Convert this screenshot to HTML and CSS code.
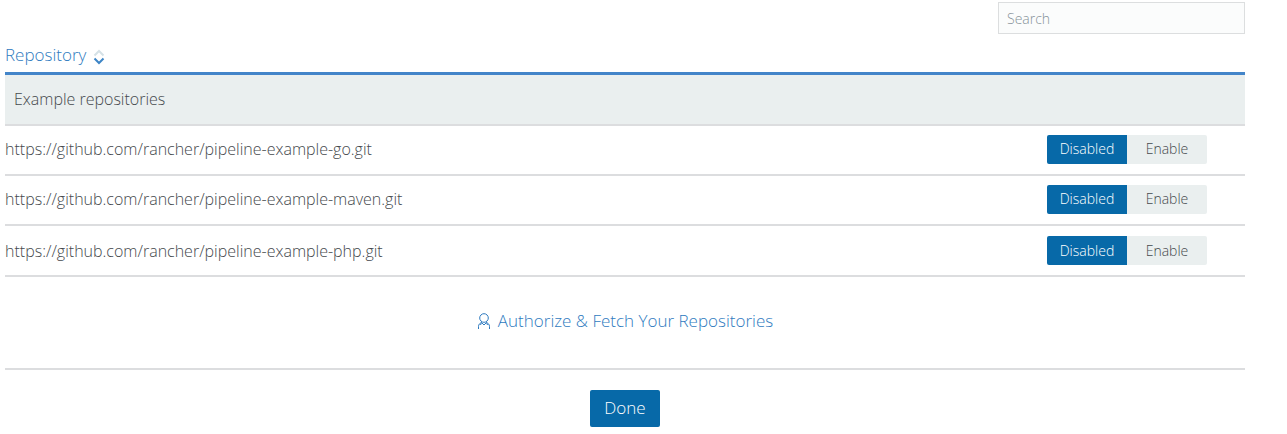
FILE: index.html
```html
<!DOCTYPE html>
<html lang="en">
<head>
<meta charset="utf-8">
<title>Repositories</title>
<link rel="stylesheet" href="styles.css">
</head>
<body>
<main class="page">
  <div class="toolbar">
    <input class="search" type="search" placeholder="Search" aria-label="Search">
  </div>
  <table class="repos">
    <thead>
      <tr>
        <th colspan="2" scope="col">
          <button class="sort" type="button">Repository
            <svg class="sort-icon" viewBox="0 0 12 16" aria-hidden="true"><path class="sort-up" d="M1.500 6.500 6 2l4.500 4.500"/><path class="sort-down" d="M1.500 9.500 6 14l4.500-4.500"/></svg>
          </button>
        </th>
      </tr>
    </thead>
    <tbody>
      <tr class="group"><td colspan="2">Example repositories</td></tr>
      <tr class="repo">
        <td>https://github.com/rancher/pipeline-example-go.git</td>
        <td class="actions"><div class="toggle"><button class="option active" type="button">Disabled</button><button class="option" type="button">Enable</button></div></td>
      </tr>
      <tr class="repo">
        <td>https://github.com/rancher/pipeline-example-maven.git</td>
        <td class="actions"><div class="toggle"><button class="option active" type="button">Disabled</button><button class="option" type="button">Enable</button></div></td>
      </tr>
      <tr class="repo">
        <td>https://github.com/rancher/pipeline-example-php.git</td>
        <td class="actions"><div class="toggle"><button class="option active" type="button">Disabled</button><button class="option" type="button">Enable</button></div></td>
      </tr>
    </tbody>
  </table>
  <div class="authorize">
    <a class="authorize-link" href="#">
      <svg class="user-icon" viewBox="0 0 14 18" aria-hidden="true"><circle cx="7" cy="6" r="4.300"/><path d="M1.500 17v-2.500c0-2 1.200-3.200 3-4L7 13l2.500-2.500c1.800.8 3 2 3 4V17M4.500 10.500l-1 2.500M9.500 10.500l1 2.500"/></svg>
      <span>Authorize &amp; Fetch Your Repositories</span>
    </a>
  </div>
  <footer class="footer">
    <button class="done" type="button">Done</button>
  </footer>
</main>
</body>
</html>
```
FILE: styles.css
```css
* {
  box-sizing: border-box;
}

body {
  margin: 0;
  background: #fff;
  color: #45494d;
  font: 300 16px/24px "Open Sans", "Noto Sans", sans-serif;
}

button,
input {
  font: inherit;
}

button {
  border: 0;
  cursor: pointer;
}

.page {
  padding: 2px 42px 7px 5px;
}

.toolbar {
  display: flex;
  justify-content: flex-end;
  margin-bottom: 9px;
}

.search {
  appearance: none;
  width: 247px;
  height: 32px;
  padding: 0 8px;
  border: 1px solid #dcdedf;
  border-radius: 0;
  background: #fbfcfc;
  color: #45494d;
  font-size: 14px;
}

.search::placeholder {
  color: #87939a;
  opacity: 1;
}

.repos {
  width: 100%;
  border-spacing: 0;
}

th,
td {
  padding: 0;
  text-align: left;
}

th {
  height: 32px;
  border-bottom: 3px solid #4385c9;
  font-weight: 300;
  vertical-align: top;
}

.sort {
  display: flex;
  align-items: center;
  gap: 7px;
  padding: 0;
  background: none;
  color: #2f7bc0;
  font-size: 17px;
}

.sort-icon {
  width: 12px;
  height: 16px;
  margin-top: 4px;
  fill: none;
  stroke-width: 2;
}

.sort-up {
  stroke: #d5e1e6;
}

.sort-down {
  stroke: #3d85c6;
}

.group td,
.repo td {
  height: 50px;
  border-bottom: 2px solid #dcdddf;
}

.group td {
  height: 51px;
  padding: 0 9px 2px;
  background: #eaefef;
}

.repo td {
  padding-bottom: 2px;
}

.repo:last-child td {
  height: 51px;
  padding-bottom: 0;
}

.actions {
  width: 198px;
}

.toggle {
  display: flex;
  width: 160px;
  border-radius: 2px;
  overflow: hidden;
}

.option {
  flex: 1;
  height: 29px;
  padding: 0;
  background: #eaefef;
  color: #45494d;
  font-size: 14px;
}

.option.active {
  background: #0769a8;
  color: #fff;
}

.authorize {
  display: flex;
  justify-content: center;
  padding: 32px 0 35px;
  border-bottom: 2px solid #dcdddf;
}

.authorize-link {
  display: flex;
  align-items: center;
  gap: 7px;
  color: #2f7bc0;
  font-size: 17px;
  text-decoration: none;
}

.user-icon {
  width: 14px;
  height: 18px;
  fill: none;
  stroke: currentColor;
  stroke-width: 1;
}

.footer {
  display: flex;
  justify-content: center;
  padding-top: 20px;
}

.done {
  height: 37px;
  padding: 0 14px 2px;
  border-radius: 2px;
  background: #0769a8;
  color: #fff;
  font-size: 17px;
}
```
